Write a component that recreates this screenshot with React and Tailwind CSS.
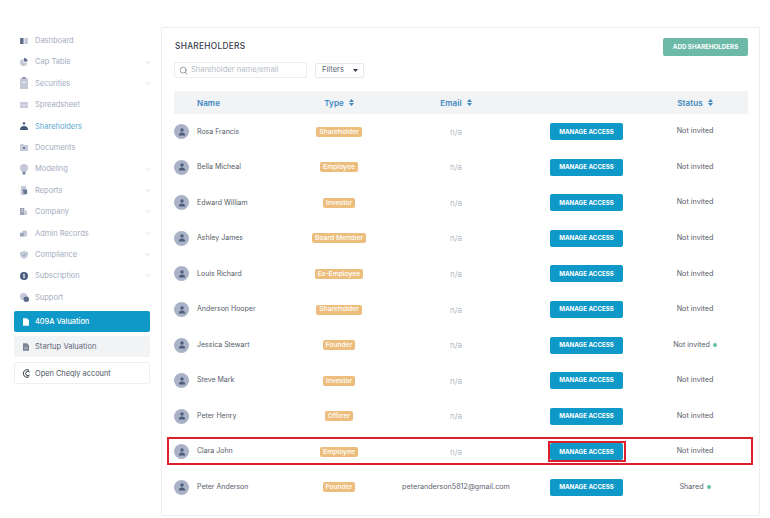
import { ChevronDown, Search } from "lucide-react";

const navItems = [
  { label: "Dashboard", icon: "dashboard" },
  { label: "Cap Table", icon: "pie", more: true },
  { label: "Securities", icon: "clipboard", more: true },
  { label: "Spreadsheet", icon: "sheet" },
  { label: "Shareholders", icon: "person", active: true },
  { label: "Documents", icon: "folder" },
  { label: "Modeling", icon: "bulb", more: true },
  { label: "Reports", icon: "report", more: true },
  { label: "Company", icon: "company", more: true },
  { label: "Admin Records", icon: "admin", more: true },
  { label: "Compliance", icon: "shield", more: true },
  { label: "Subscription", icon: "dollar", more: true },
  { label: "Support", icon: "support" },
];

const rows = [
  { name: "Rosa Francis", type: "Shareholder" },
  { name: "Bella Micheal", type: "Employee" },
  { name: "Edward William", type: "Investor" },
  { name: "Ashley James", type: "Board Member" },
  { name: "Louis Richard", type: "Ex-Employee" },
  { name: "Anderson Hooper", type: "Shareholder" },
  { name: "Jessica Stewart", type: "Founder", status: "Not invited", dot: true },
  { name: "Steve Mark", type: "Investor" },
  { name: "Peter Henry", type: "Officer" },
  { name: "Clara John", type: "Employee", marked: true },
  { name: "Peter Anderson", type: "Founder", email: "peteranderson5812@gmail.com", status: "Shared", dot: true },
];

const rowGrid = "grid grid-cols-[103px_124px_110px_151px_66px] items-center";

function NavIcon({ name }) {
  const dark = "#7f8aa3";
  const light = "#c3c9d6";
  switch (name) {
    case "dashboard":
      return (
        <svg width="8" height="6" viewBox="0 0 9 7">
          <rect width="4" height="7" fill="#5d6a88" />
          <rect x="5" width="4" height="7" fill={light} />
        </svg>
      );
    case "pie":
      return (
        <svg width="8" height="8" viewBox="0 0 9 9">
          <path d="M4 1v4h4a4 4 0 1 1-4-4z" fill={light} />
          <path d="M4.500 0a4 4 0 0 1 4 4h-4z" fill="#5d6a88" />
        </svg>
      );
    case "clipboard":
      return (
        <svg width="8" height="12" viewBox="0 0 8 12">
          <rect y="1" width="8" height="11" rx="1" fill={light} />
          <rect x="2.500" width="3" height="2" fill={dark} />
          <rect x="2" y="5" width="4" height="1" fill="#eef0f4" />
        </svg>
      );
    case "sheet":
      return (
        <svg width="8" height="6" viewBox="0 0 9 7">
          <rect width="9" height="7" rx="1" fill={light} />
          <path d="M0 3.500h9M4.500 3.500V7" stroke="#f3f4f7" strokeWidth="0.7" />
        </svg>
      );
    case "person":
      return (
        <svg width="8" height="8" viewBox="0 0 9 9">
          <circle cx="4.500" cy="1.600" r="1.500" fill="#5d6a88" />
          <path d="M0 9c0-3 1.500-4.500 4.500-4.500S9 6 9 9z" fill="#46597c" />
        </svg>
      );
    case "folder":
      return (
        <svg width="8" height="7" viewBox="0 0 9 8">
          <path d="M0 0h3.500l1 1H9v7H0z" fill={light} />
          <rect x="3.500" y="3.500" width="2" height="2" fill="#5d6a88" />
        </svg>
      );
    case "bulb":
      return (
        <svg width="8" height="11" viewBox="0 0 8 11">
          <circle cx="4" cy="4" r="4" fill={light} />
          <rect x="2.500" y="7.500" width="3" height="3" fill={dark} />
        </svg>
      );
    case "report":
      return (
        <svg width="8" height="9" viewBox="0 0 9 10">
          <rect x="1" width="6" height="10" rx="1" fill={light} />
          <path d="M3 4h5v5H4z" fill="#6b7690" />
        </svg>
      );
    case "company":
      return (
        <svg width="7" height="7" viewBox="0 0 8 8">
          <rect width="5" height="8" fill="#9aa3b7" />
          <rect x="5" y="3" width="3" height="5" fill={light} />
          <path d="M1.500 2h2M1.500 4h2" stroke="#eef0f4" strokeWidth="0.8" />
        </svg>
      );
    case "admin":
      return (
        <svg width="7" height="7" viewBox="0 0 9 8">
          <rect x="3" width="6" height="8" rx="1" fill={light} />
          <rect y="3" width="5" height="5" rx="0.6" fill="#9aa3b7" />
        </svg>
      );
    case "shield":
      return (
        <svg width="8" height="8" viewBox="0 0 9 9">
          <path d="M4.500 0 9 1.300V4c0 2.600-2 4.200-4.500 5C2 8.200 0 6.600 0 4V1.300z" fill={light} />
          <path d="M2.800 4.300 4.100 5.600 6.300 3.200" stroke="#7f8aa3" strokeWidth="0.8" fill="none" />
        </svg>
      );
    case "dollar":
      return (
        <svg width="8" height="8" viewBox="0 0 9 9">
          <circle cx="4.500" cy="4.500" r="4.500" fill="#46597c" />
          <path d="M5.800 3.200C5.300 2.600 3.300 2.500 3.300 3.500s2.500.9 2.500 2-2.100 1-2.700.3M4.500 1.800v5.400" stroke="#fff" strokeWidth="0.7" fill="none" />
        </svg>
      );
    case "support":
      return (
        <svg width="9" height="9" viewBox="0 0 10 10">
          <circle cx="4" cy="4" r="4" fill={light} />
          <circle cx="7" cy="7" r="3" fill="#5d6a88" />
        </svg>
      );
    default:
      return null;
  }
}

function DocIcon({ color }) {
  return (
    <svg width="6" height="8" viewBox="0 0 7 9">
      <path d="M0 0h4.500L7 2.500V9H0z" fill={color} />
      <path d="M1.500 4.500h4M1.500 6.200h4" stroke="#ffffff" strokeWidth="0.6" opacity="0.7" />
    </svg>
  );
}

function Sidebar() {
  return (
    <aside className="w-[161px] shrink-0 pt-[30px]">
      <nav className="flex flex-col">
        {navItems.map((item) => (
          <div key={item.label} className="h-[21.4px] flex items-center pl-[20px] pr-[10px]">
            <span className="w-[15px] flex justify-start shrink-0">
              <NavIcon name={item.icon} />
            </span>
            <span className={`text-[7.5px] ${item.active ? "text-[#5aa9d2]" : "text-[#a4acc0]"}`}>
              {item.label}
            </span>
            {item.more && <ChevronDown size={7} strokeWidth={1.5} className="ml-auto text-[#a4acc0]" />}
          </div>
        ))}
      </nav>
      <div className="ml-[14px] w-[136px] mt-[3px] flex flex-col gap-[4px]">
        <div className="h-[21px] rounded-[2px] bg-[#0f99c8] flex items-center pl-[9px] gap-[6px] text-white text-[7.4px] font-medium">
          <DocIcon color="#ffffff" />
          409A Valuation
        </div>
        <div className="h-[21px] rounded-[2px] bg-[#f2f3f5] flex items-center pl-[9px] gap-[6px] text-[#5f6878] text-[7.6px]">
          <DocIcon color="#7a8294" />
          Startup Valuation
        </div>
        <div className="h-[22px] mt-[1px] rounded-[2px] bg-white border border-[#eeeff2] flex items-center pl-[7px] gap-[4px] text-[#4d5563] text-[7.4px]">
          <svg width="9" height="9" viewBox="0 0 9 9" fill="none" stroke="#2f3644" strokeWidth="1">
            <path d="M7 1.200A3.800 3.800 0 1 0 7 7.800" />
            <path d="M7.500 3A2.200 2.200 0 1 0 7.500 6" />
          </svg>
          Open Cheqly account
        </div>
      </div>
    </aside>
  );
}

function SortIcon() {
  return (
    <span className="inline-flex flex-col text-[#3d87c0] ml-[5px]">
      <svg width="5" height="7" viewBox="0 0 5 7" fill="currentColor">
        <path d="M2.500 0 5 3H0zM2.500 7 0 4h5z" />
      </svg>
    </span>
  );
}

function TableHeader() {
  return (
    <div className={`${rowGrid} h-[23px] bg-[#f1f3f5] text-[8px] font-semibold text-[#3d87c0] tracking-[0.1px]`}>
      <span className="pl-[23px]">Name</span>
      <span className="flex items-center justify-center">Type<SortIcon /></span>
      <span className="flex items-center justify-center">Email<SortIcon /></span>
      <span />
      <span className="flex items-center justify-center">Status<SortIcon /></span>
    </div>
  );
}

function Avatar() {
  return (
    <span className="w-[15px] h-[15px] rounded-full bg-[#a9b2c6] flex items-center justify-center shrink-0">
      <svg width="8" height="8" viewBox="0 0 8 8" fill="#4f5d7c">
        <circle cx="4" cy="2" r="1.700" />
        <path d="M0.800 7.600C0.800 5.400 2 4.400 4 4.400s3.200 1 3.200 3.200z" />
      </svg>
    </span>
  );
}

function Row({ row }) {
  return (
    <div className={`${rowGrid} h-[35.55px] relative`}>
      <div className="flex items-center gap-[8px] text-[7px] text-[#555c68]">
        <Avatar />
        {row.name}
      </div>
      <div className="flex justify-center">
        <span className="h-[10px] px-[3px] rounded-[2px] bg-[#ecbd7c] text-white text-[6.8px] font-medium flex items-center whitespace-nowrap">
          {row.type}
        </span>
      </div>
      <div className={`text-center whitespace-nowrap ${row.email ? "text-[7.2px] text-[#5d6470]" : "text-[8px] text-[#b4b8c0]"}`}>
        {row.email || "n/a"}
      </div>
      <div className="flex justify-center">
        <button className="w-[73px] h-[17px] rounded-[2px] bg-[#0f99c8] text-white text-[6.2px] font-bold pb-[1px]">
          MANAGE ACCESS
        </button>
      </div>
      <div className="flex items-center justify-center gap-[3px] text-[7.2px] text-[#555c68] whitespace-nowrap">
        {row.status || "Not invited"}
        {row.dot && <span className="w-[4px] h-[4px] rounded-full bg-[#64bfa6]" />}
      </div>
      {row.marked && (
        <>
          <div className="absolute left-[-7px] top-[3px] w-[586px] h-[28px] border-2 border-[#dc1f2d]" />
          <div className="absolute left-[374px] top-[7px] w-[78px] h-[21px] border-2 border-[#dc1f2d]" />
        </>
      )}
    </div>
  );
}

export default function App() {
  return (
    <div className="w-[770px] h-[518px] bg-white flex font-['Inter',sans-serif] overflow-hidden">
      <Sidebar />
      <main className="w-[599px] h-[489px] mt-[27px] border border-[#eceef0] rounded-[2px] pl-[12px] pr-[11px] pt-[10px]">
        <div className="flex items-start justify-between">
          <h1 className="mt-[2px] ml-[1px] text-[8.3px] font-medium text-[#3a404c] tracking-[0.3px]">SHAREHOLDERS</h1>
          <button className="w-[85px] h-[18px] rounded-[2px] bg-[#6cb9a8] text-white text-[6.2px] font-bold">
            ADD SHAREHOLDERS
          </button>
        </div>
        <div className="mt-[6px] flex items-center gap-[8px]">
          <div className="w-[133px] h-[16px] border border-[#eceef0] rounded-[2px] flex items-center pl-[4px] gap-[3px]">
            <Search size={9} strokeWidth={2} className="text-[#7b8290]" />
            <span className="text-[7.6px] text-[#b6bbc5]">Shareholder name/email</span>
          </div>
          <div className="w-[49px] h-[15px] border border-[#e6e8eb] rounded-[2px] flex items-center pl-[6px] text-[7.6px] text-[#5f6672]">
            Filters
            <svg width="5" height="3" viewBox="0 0 5 3" className="ml-auto mr-[5px]" fill="#2f3644">
              <path d="M0 0h5L2.500 3z" />
            </svg>
          </div>
        </div>
        <div className="mt-[13px]">
          <TableHeader />
          {rows.map((row) => (
            <Row key={row.name} row={row} />
          ))}
        </div>
      </main>
    </div>
  );
}
